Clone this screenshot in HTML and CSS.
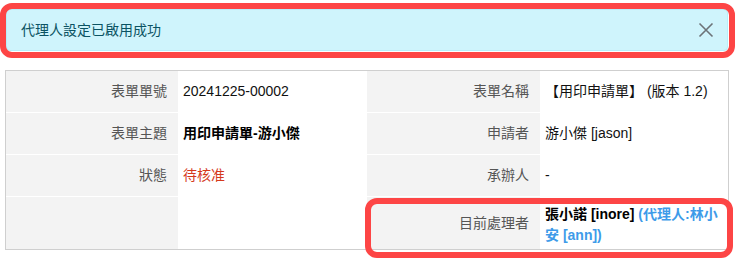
FILE: index.html
```html
<!DOCTYPE html>
<html lang="zh-Hant">
<head>
<meta charset="utf-8">
<title>代理人設定</title>
<link rel="stylesheet" href="styles.css">
</head>
<body>
<div class="page">
  <div class="alert">
    <span class="alert-text">代理人設定已啟用成功</span>
    <button class="alert-close" type="button" aria-label="關閉">
      <svg width="16" height="16" viewBox="0 0 16 16"><path d="M1.5 1.5 L14.5 14.5 M14.5 1.5 L1.5 14.5" stroke="#6c7378" stroke-width="1.6" fill="none"/></svg>
    </button>
  </div>

  <table class="info">
    <colgroup>
      <col class="c-label1"><col class="c-value1"><col class="c-label2"><col class="c-value2">
    </colgroup>
    <tr>
      <td class="label">表單單號</td>
      <td class="value">20241225-00002</td>
      <td class="label">表單名稱</td>
      <td class="value">【用印申請單】 (版本 1.2)</td>
    </tr>
    <tr>
      <td class="label">表單主題</td>
      <td class="value strong">用印申請單-游小傑</td>
      <td class="label">申請者</td>
      <td class="value">游小傑 [jason]</td>
    </tr>
    <tr>
      <td class="label">狀態</td>
      <td class="value status">待核准</td>
      <td class="label">承辦人</td>
      <td class="value">-</td>
    </tr>
    <tr class="last">
      <td class="label"></td>
      <td class="value"></td>
      <td class="label">目前處理者</td>
      <td class="value handler"><span class="strong">張小諾 [inore]</span> <span class="agent">(代理人:林小</span><span class="agent">安 [ann])</span></td>
    </tr>
  </table>

  <div class="mark mark-alert"></div>
  <div class="mark mark-handler"></div>
</div>
</body>
</html>
```

FILE: styles.css
```css
html, body {
  margin: 0;
  padding: 0;
  background: #ffffff;
}

body {
  font-family: "Liberation Sans", "Noto Sans CJK TC", Arial, sans-serif;
  font-size: 14px;
  color: #000;
}

.page {
  position: relative;
  width: 735px;
  height: 258px;
  overflow: hidden;
}

.alert {
  display: flex;
  align-items: center;
  justify-content: space-between;
  box-sizing: border-box;
  height: 42px;
  margin: 9px 7px 19px 6px;
  padding: 0 12px 0 14px;
  background: #cff4fc;
  border: 1px solid #b6effb;
  border-radius: 4px;
  color: #0b5363;
  line-height: 21px;
}

.alert-close {
  display: flex;
  align-items: center;
  justify-content: center;
  width: 18px;
  height: 18px;
  padding: 0;
  border: 0;
  background: transparent;
}

.info {
  margin-left: 5px;
  width: 723px;
  table-layout: fixed;
  border-collapse: separate;
  border-spacing: 0;
  border: 1px solid #cfcfcf;
}

.c-label1 { width: 172px; }
.c-value1 { width: 189px; }
.c-label2 { width: 173px; }
.c-value2 { width: 188px; }

.info td {
  height: 42px;
  box-sizing: border-box;
  padding: 5px 5px;
  line-height: 21px;
  vertical-align: middle;
  border-bottom: 1px solid #ffffff;
}

.info tr.last td {
  border-bottom: 0;
  height: 52px;
}

.info td.handler {
  padding-top: 7px;
  padding-bottom: 3px;
}

.label {
  background: #f3f3f3;
  color: #555555;
  text-align: right;
  padding-right: 11px !important;
}

.value {
  background: #ffffff;
  color: #111111;
  padding-left: 5px;
  padding-right: 2px !important;
}

.strong {
  font-weight: bold;
  color: #000;
}

.status {
  color: #d5391c;
}

.agent {
  font-weight: bold;
  color: #3d9be9;
}

.mark {
  position: absolute;
  box-sizing: border-box;
  border: 6px solid #fd4545;
  border-radius: 12px;
  pointer-events: none;
}

.mark-alert {
  left: 0;
  top: 3px;
  width: 735px;
  height: 55px;
}

.mark-handler {
  left: 365px;
  top: 198px;
  width: 368px;
  height: 60px;
}
```
